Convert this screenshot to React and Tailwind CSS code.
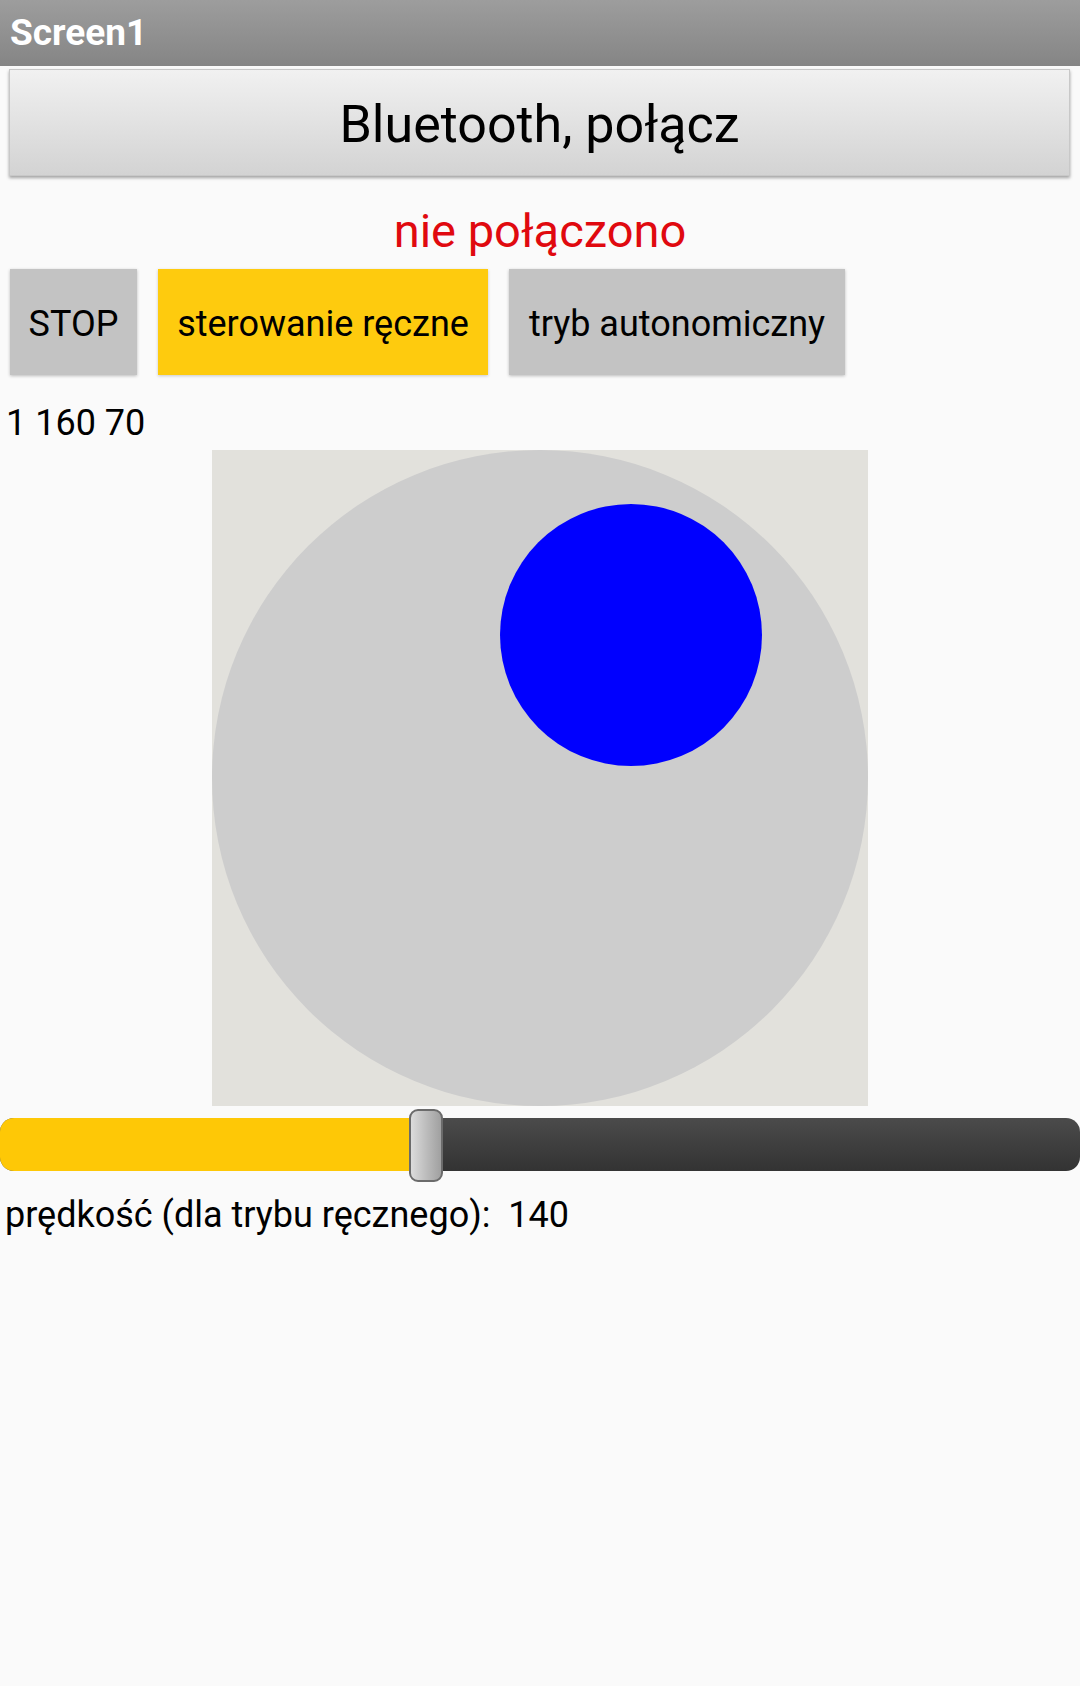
const Joystick = () => {
  return <svg width="656" height="656" viewBox="0 0 656 656" className="block">
      <rect x="0" y="0" width="656" height="656" fill="#e2e1dc" />
      <circle cx="328" cy="328" r="328" fill="#cdcdcd" />
      <circle cx="419" cy="185" r="131" fill="#0000ff" />
    </svg>;
};

const SpeedSlider = ({ value }) => {
  const pos = 426;
  return <div className="relative h-[73px] w-full">
      <div className="absolute left-0 right-0 top-[9px] h-[53px] rounded-[14px] bg-gradient-to-b from-[#4b4b4b] to-[#333333]" />
      <div className="absolute left-0 top-[9px] h-[53px] rounded-l-[14px] bg-[#fec806]" style={{ width: pos }} />
      <div className="absolute top-0 h-[73px] w-[34px] rounded-[9px] border-2 border-[#6b6b6b] bg-gradient-to-r from-[#dcdcdc] via-[#bdbdbd] to-[#a0a0a0]" style={{ left: pos - 17 }} />
    </div>;
};

export default function App() {
  return <div className="min-h-[1686px] w-[1080px] bg-[#fafafa] font-['Roboto','Noto_Sans',sans-serif] text-black">
      <div className="flex h-[66px] items-center bg-gradient-to-b from-[#9d9d9d] to-[#858585] px-[10px]">
        <span className="text-[37px] font-bold text-white">Screen1</span>
      </div>

      <div className="px-[9px] pt-[3px]">
        <button className="flex h-[107px] w-[1061px] items-center justify-center border border-[#c8c8c8] bg-gradient-to-b from-[#f1f1f1] to-[#d3d3d3] pt-[4px] text-[52px] shadow-[0_2px_3px_rgba(0,0,0,0.35)]">
          Bluetooth, połącz
        </button>
      </div>

      <div className="mt-[27px] h-[56px] text-center text-[47px] leading-[56px] text-[#e0090f]">
        nie połączono
      </div>

      <div className="mt-[10px] flex gap-[21px] px-[10px]">
        <button className="h-[106px] w-[127px] bg-[#c3c3c3] pt-[3px] text-[36px] shadow-[0_1px_3px_rgba(0,0,0,0.25)]">STOP</button>
        <button className="h-[106px] w-[330px] bg-[#fecb0e] pt-[3px] text-[36px] shadow-[0_1px_3px_rgba(0,0,0,0.2)]">sterowanie ręczne</button>
        <button className="h-[106px] w-[336px] bg-[#c3c3c3] pt-[3px] text-[36px] shadow-[0_1px_3px_rgba(0,0,0,0.25)]">tryb autonomiczny</button>
      </div>

      <div className="mt-[28px] mb-[6px] px-[6px] text-[36px] leading-[41px]">1 160 70</div>

      <div className="flex justify-center">
        <Joystick />
      </div>

      <div className="mt-[3px]">
        <SpeedSlider value={140} />
      </div>

      <div className="mt-[13px] whitespace-pre px-[5px] text-[36px] leading-[41px]">
        prędkość (dla trybu ręcznego):  140
      </div>
    </div>;
}
